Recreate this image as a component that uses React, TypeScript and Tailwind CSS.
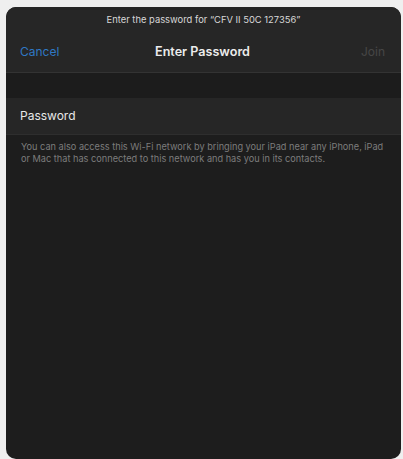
export default function App() {
  return (
    <div className="h-[459px] w-[403px] overflow-hidden bg-[#efefef] pl-[6px] pr-[2px] pt-[7px] font-['Inter','Liberation_Sans',sans-serif]">
      <div className="flex h-[452px] flex-col overflow-hidden rounded-[10px] bg-[#1d1d1d]">
        {/* Header */}
        <div className="flex h-[66px] flex-col border-b border-[#333] bg-[#262626]">
          <p className="pt-[6px] text-center text-[9.4px] leading-[14px] text-[#d8d8d8]">
            Enter the password for “CFV II 50C 127356”
          </p>
          <div className="mt-[7px] flex h-[36px] items-center justify-between pl-[14px] pr-[16px]">
            <span className="w-[60px] text-[12px] text-[#2f78c4]">Cancel</span>
            <span className="text-[12.6px] font-semibold text-[#ececec]">Enter Password</span>
            <span className="w-[60px] text-right text-[12px] text-[#464646]">Join</span>
          </div>
        </div>

        <div className="h-[25px] bg-[#1c1c1c]" />

        {/* Password field */}
        <div className="flex h-[37px] items-center border-b border-[#2e2e2e] bg-[#262626] px-[14px]">
          <span className="text-[12px] text-[#e8e8e8]">Password</span>
        </div>

        <p className="pl-[15px] pr-[12px] pt-[6px] text-[9.2px] leading-[12px] text-[#7c7c7c]">
          You can also access this Wi-Fi network by bringing your iPad near any iPhone, iPad or Mac that has connected to this network and has you in its contacts.
        </p>
      </div>
    </div>
  );
}
